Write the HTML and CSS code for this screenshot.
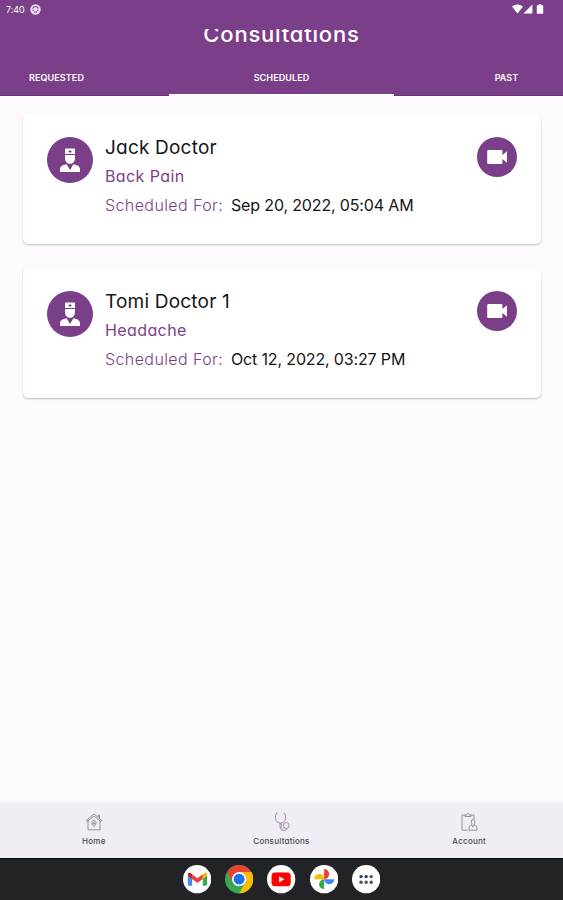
FILE: index.html
```
<!DOCTYPE html>
<html lang="en">
<head>
    <meta charset="UTF-8">
    <meta name="viewport" content="width=device-width, initial-scale=1.0">
    <title>Consultations</title>
    <link rel="stylesheet" href="styles.css">
</head>
<body>
    <!-- Shared icons -->
    <svg class="sprite" width="0" height="0">
        <symbol id="doctor" viewBox="0 0 20 24">
            <path fill="#fff" d="M5 1.200Q5 .4 6 .4h8q1 0 1 .8V6H5Z"/>
            <path fill="#fff" d="M5 7h10v3.200c0 3.200-2.300 5.600-5 5.600s-5-2.400-5-5.600Z"/>
            <path fill="#fff" d="M0 24v-2.800C0 18 3 17 6.600 16.200L10 22l3.400-5.800C17 17 20 18 20 21.200V24Z"/>
            <path stroke="#7a3f88" stroke-width="1" d="M10 2v3M8.500 3.500h3"/>
        </symbol>
        <symbol id="video" viewBox="0 0 20 14">
            <path fill="#fff" d="M1.200 0h13.200q1 0 1 1v3.900L20 1.200v11.600l-4.600-3.700V13q0 1-1 1H1.200Q.2 14 .2 13V1q0-1 1-1Z"/>
        </symbol>
    </svg>

    <div class="app">
        <header class="header">
            <div class="status-bar">
                <span class="time">7:40</span>
                <svg width="11" height="11" viewBox="0 0 11 11"><circle cx="5.5" cy="5.5" r="5.2" fill="#eadff0"/><path d="M2.6 4.7a3 3 0 0 1 5.8 0M2.5 6.2h1.6M6.9 6.2h1.6M4 8h3" fill="none" stroke="#7a3f88" stroke-width="1.1"/></svg>
                <svg class="signals" width="33" height="11" viewBox="0 0 33 11"><path fill="#fff" d="M0 2.6Q5.5-1.4 11 2.6L5.5 9.5ZM20.4.4v9.1h-8.9ZM25.4 1.2h1.4V0h2.4v1.2h1.4q.6 0 .6.6v7.4q0 .6-.6.6h-5.2q-.6 0-.6-.6V1.8q0-.6.6-.6Z"/></svg>
            </div>
            <div class="title-clip"><h1>Consultations</h1></div>
            <nav class="tabs">
                <span class="tab">REQUESTED</span>
                <span class="tab active">SCHEDULED</span>
                <span class="tab">PAST</span>
            </nav>
        </header>

        <main class="list">
            <div class="card">
                <div class="avatar"><svg width="20" height="24"><use href="#doctor"/></svg></div>
                <div class="info">
                    <div class="name">Jack Doctor</div>
                    <div class="reason">Back Pain</div>
                    <div class="when"><span class="label">Scheduled For:</span><span class="date">Sep 20, 2022, 05:04 AM</span></div>
                </div>
                <div class="call"><svg width="20" height="14"><use href="#video"/></svg></div>
            </div>
            <div class="card">
                <div class="avatar"><svg width="20" height="24"><use href="#doctor"/></svg></div>
                <div class="info">
                    <div class="name">Tomi Doctor 1</div>
                    <div class="reason">Headache</div>
                    <div class="when"><span class="label">Scheduled For:</span><span class="date">Oct 12, 2022, 03:27 PM</span></div>
                </div>
                <div class="call"><svg width="20" height="14"><use href="#video"/></svg></div>
            </div>
        </main>

        <nav class="bottom-nav">
            <div class="nav-item">
                <svg width="18" height="20" viewBox="0 0 18 20"><path d="M3 8.5v9.300h12V8.500M1 8.600 9 2l8 6.600M1 8.600l1 1L9 4l7 5.600 1-1M13 5V3.300h1.500V6.500M9 8c1.700 1 2 1.600 2 3s-.3 2.200-2 3.500C7.300 13.200 7 12.400 7 11s.3-2 2-3ZM9 9.600v3.400M7.800 11.300h2.400"/></svg>
                <span>Home</span>
            </div>
            <div class="nav-item current">
                <svg width="18" height="20" viewBox="0 0 18 20"><path d="M4.500 1.300Q2.500 1.300 2.500 3.500V6c0 3 1.800 5 5 5s5-2 5-5V3.500q0-2.200-2-2.200M7 11v3.200c0 3 1.400 4.300 3.600 4.300 2.300 0 3.300-1 3.500-2.200M8.300 11v3c0 2 .8 3 2.200 3"/><circle cx="13.200" cy="13.500" r="2.900"/></svg>
                <span>Consultations</span>
            </div>
            <div class="nav-item">
                <svg width="18" height="20" viewBox="0 0 18 20"><path d="M5 3H2v15.200h6M11 3h3v4M5 4.500h6V3H9.500C9.500 1 6.500 1 6.500 3H5ZM13 7.500c-2.200 0-2.200 2.800-1.200 4v1.300c-2 .8-2.800 1.400-2.800 3.200v2.200h8V16c0-1.800-.9-2.400-2.800-3.200v-1.300c1-1.200 1-4-1.200-4ZM11.800 13l1.200 2 1.200-2"/></svg>
                <span>Account</span>
            </div>
        </nav>

        <footer class="dock">
            <!-- Gmail -->
            <svg viewBox="0 0 28 28"><circle cx="14" cy="14" r="14" fill="#fff"/><path fill="#4285f4" d="M4.800 10.500 9 13.500v7H6q-1.200 0-1.200-1.200Z"/><path fill="#34a853" d="M23.800 10.500l-4.200 3v7h3q1.200 0 1.200-1.200Z"/><path fill="#ea4335" d="M9 9.200l5.300 4 5.300-4v4.600l-5.300 4-5.300-4Z"/><path fill="#c5221f" d="M4.800 10.600V9.500C4.800 7.500 6.600 7.300 7.800 8.200L9 9.200v4.600Z"/><path fill="#fbbc04" d="M23.800 10.600V9.500c0-2-1.800-2.200-3-1.300l-1.200 1v4.600Z"/></svg>
            <!-- Chrome -->
            <svg viewBox="0 0 28 28"><circle cx="14" cy="14" r="14" fill="#34a853"/><path fill="#ea4335" d="M1.880 7A14 14 0 0 1 26.120 7H14L7.940 17.500Z"/><path fill="#fbbc04" d="M26.120 7A14 14 0 0 1 14 28L20.060 17.500 14 7Z"/><circle cx="14" cy="14" r="7" fill="#fff"/><circle cx="14" cy="14" r="5.400" fill="#1a73e8"/></svg>
            <!-- YouTube -->
            <svg viewBox="0 0 28 28"><circle cx="14" cy="14" r="14" fill="#fff"/><rect x="4.500" y="7.500" width="19" height="13.500" rx="3.500" fill="#f00"/><path fill="#fff" d="M12 11.200v6l5.200-3Z"/></svg>
            <!-- Photos -->
            <svg viewBox="0 0 28 28"><circle cx="14" cy="14" r="14" fill="#fff"/><path fill="#ea4335" d="M14 4a5 5 0 0 1 0 10Z"/><path fill="#4285f4" d="M24 14a5 5 0 0 1-10 0Z"/><path fill="#34a853" d="M14 24a5 5 0 0 1 0-10Z"/><path fill="#fbbc04" d="M4 14a5 5 0 0 1 10 0Z"/></svg>
            <!-- All apps -->
            <svg viewBox="0 0 28 28"><circle cx="14" cy="14" r="14" fill="#fff"/><g fill="#27338a"><circle cx="9" cy="11.500" r="1.700"/><circle cx="14" cy="11.500" r="1.700"/></g><g fill="#50545f"><circle cx="19" cy="11.500" r="1.700"/><circle cx="9" cy="17" r="1.700"/><circle cx="14" cy="17" r="1.700"/><circle cx="19" cy="17" r="1.700"/></g></svg>
        </footer>
    </div>
</body>
</html>
```
FILE: styles.css
```
* { box-sizing: border-box; }
body { margin: 0; font-family: Inter, "Open Sans", sans-serif; font-feature-settings: "cv11"; background: #fdf9fe; color: #151515; }
svg { display: block; }
.sprite { position: absolute; }
.app { display: flex; flex-direction: column; height: 900px; overflow: hidden; }

/* Header */
.header { height: 96px; background: #7a3f88; color: #fff; border-bottom: 1px solid #6a2e7b; flex: none; }
.status-bar { display: flex; align-items: center; height: 18px; padding: 0 18px 0 6px; gap: 4px; }
.time { font-size: 9px; width: 20px; letter-spacing: -0.1px; }
.signals { margin-left: auto; }
/* the title is scrolled partly under the status bar */
.title-clip { height: 31px; margin-top: 11px; overflow: hidden; }
h1 { margin: -8px 0 0; font-size: 22px; line-height: 26px; font-weight: 500; text-align: center; letter-spacing: 0.8px; }
.tabs { display: flex; margin: 0 -56px; height: 36px; }
.tab { flex: 1; text-align: center; font-size: 9px; font-weight: 600; line-height: 36px; height: 36px; letter-spacing: 0.1px; }
.tab.active { border-bottom: 2px solid #fff; }

/* Consultation cards */
.list { flex: 1; padding: 18px 22px 0 23px; display: flex; flex-direction: column; gap: 24px; }
.card { display: flex; height: 130px; padding: 22.5px 24px; background: #fff; border-radius: 5px; box-shadow: 0 1px 2px rgba(0, 0, 0, 0.25); }
.avatar, .call { display: flex; align-items: center; justify-content: center; border-radius: 50%; background: #7a3f88; flex: none; }
.avatar { width: 46px; height: 46px; }
.call { width: 40px; height: 40px; }
.info { flex: 1; padding-left: 12px; margin-top: -0.5px; white-space: nowrap; }
.name { font-size: 19px; line-height: 24px; letter-spacing: 0.2px; }
.reason { font-size: 16px; line-height: 24px; margin-top: 4px; color: #7a3f88; letter-spacing: 0.4px; }
.when { font-size: 16px; line-height: 24px; margin-top: 5px; display: flex; }
.label { width: 126px; color: #7a3f88; font-weight: 300; letter-spacing: 0.4px; }
.date { letter-spacing: -0.15px; }

/* Bottom navigation */
.bottom-nav { display: flex; height: 56px; background: #f1edf4; flex: none; }
.nav-item { flex: 1; display: flex; flex-direction: column; align-items: center; padding-top: 10px; font-size: 8px; line-height: 12px; font-weight: 500; letter-spacing: 0.25px; color: #4d4751; }
.nav-item svg { fill: none; stroke: #817687; stroke-width: 0.8; }
.nav-item span { margin-top: 3px; }
.nav-item.current svg { stroke: #9572a2; }

.dock { display: flex; justify-content: center; align-items: center; gap: 14px; height: 42px; background: #222326; border-top: 1px solid #08080a; flex: none; }
.dock svg { width: 28.3px; height: 28.3px; }
```
